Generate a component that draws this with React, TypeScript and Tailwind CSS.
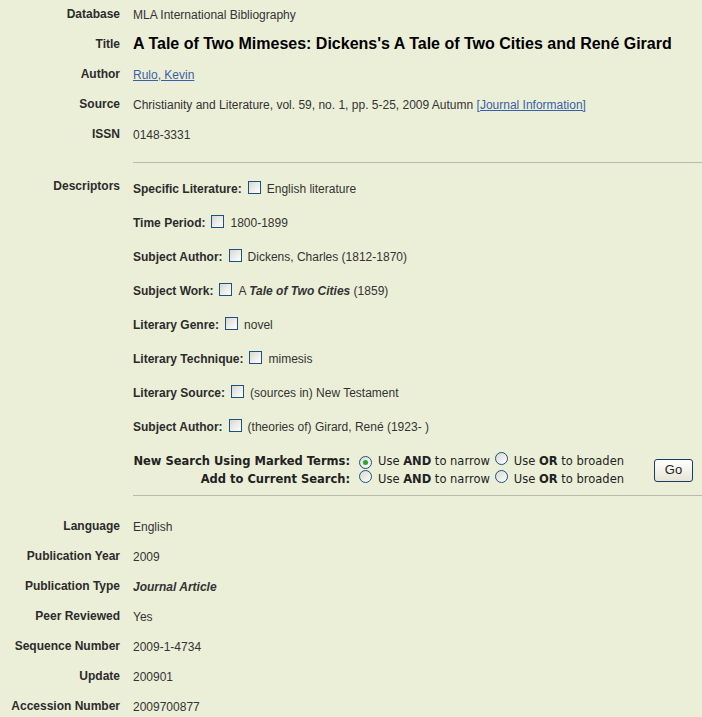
import React from 'react';

const SANS = { fontFamily: '"Liberation Sans", Arial, sans-serif' };

function Checkbox() {
  return (
    <span className="inline-block w-[13px] h-[13px] border border-[#1c5180] bg-gradient-to-br from-[#d8d8d2] to-white mx-[6px] shrink-0 -mt-[3px]" />
  );
}

function Radio({ checked = false }: { checked?: boolean }) {
  return (
    <span className="inline-flex w-[13px] h-[13px] rounded-full border border-[#1c5180] bg-gradient-to-br from-[#d8d8d2] to-white items-center justify-center shrink-0">
      {checked && <span className="w-[5px] h-[5px] rounded-full bg-[#2fa52f]" />}
    </span>
  );
}

function Row({ label, children, tall = false }: { label: string; children: React.ReactNode; tall?: boolean }) {
  return (
    <div className="flex h-[30px]">
      <div className="w-[120px] shrink-0 text-right pt-[7px] text-[12px] leading-[14px] font-bold text-[#2b2b2b]">{label}</div>
      <div className={`ml-[13px] ${tall ? 'pt-[4px]' : 'pt-[8px]'} text-[12px] leading-[14px] text-[#333] whitespace-nowrap`}>{children}</div>
    </div>
  );
}

const descriptors: { label: string; value: React.ReactNode }[] = [
  { label: 'Specific Literature:', value: 'English literature' },
  { label: 'Time Period:', value: '1800-1899' },
  { label: 'Subject Author:', value: 'Dickens, Charles (1812-1870)' },
  { label: 'Subject Work:', value: <>A <b><i>Tale of Two Cities</i></b> (1859)</> },
  { label: 'Literary Genre:', value: 'novel' },
  { label: 'Literary Technique:', value: 'mimesis' },
  { label: 'Literary Source:', value: '(sources in) New Testament' },
  { label: 'Subject Author:', value: '(theories of) Girard, René (1923- )' },
];

const details: [string, React.ReactNode][] = [
  ['Language', 'English'],
  ['Publication Year', '2009'],
  ['Publication Type', <b key="t"><i>Journal Article</i></b>],
  ['Peer Reviewed', 'Yes'],
  ['Sequence Number', '2009-1-4734'],
  ['Update', '200901'],
  ['Accession Number', '2009700877'],
];

export default function App() {
  return (
    <div className="min-h-screen w-[702px] bg-[#ecefd8] overflow-hidden" style={SANS}>
      {/* Citation */}
      <Row label="Database">MLA International Bibliography</Row>
      <Row label="Title" tall>
        <span className="text-[16px] leading-[20px] font-bold text-black">
          A Tale of Two Mimeses: Dickens's A Tale of Two Cities and René Girard
        </span>
      </Row>
      <Row label="Author">
        <a href="#" className="text-[#3a5fa8] underline">Rulo, Kevin</a>
      </Row>
      <Row label="Source">
        Christianity and Literature, vol. 59, no. 1, pp. 5-25, 2009 Autumn{' '}
        <a href="#" className="text-[#3a5fa8] underline">[Journal Information]</a>
      </Row>
      <Row label="ISSN">0148-3331</Row>

      <div className="ml-[133px] mt-[12px] border-t border-[#b9bda7]" />

      {/* Descriptors */}
      <div className="flex">
        <div className="w-[120px] shrink-0 text-right pt-[16px] text-[12px] leading-[14px] font-bold text-[#2b2b2b]">Descriptors</div>
        <div className="ml-[13px] flex-1 pt-[9px]">
          {descriptors.map((d, i) => (
            <div key={i} className="h-[34px] flex items-center whitespace-nowrap">
              <span className="text-[12px] font-bold text-[#2b2b2b]">{d.label}</span>
              <Checkbox />
              <span className="text-[12px] text-[#333]">{d.value}</span>
            </div>
          ))}

          {/* Search using marked terms */}
          <div className="flex items-center mt-[8px]" style={{ fontFamily: '"DejaVu Sans", Verdana, sans-serif' }}>
            <div className="text-[11.5px] leading-[18px] text-[#222]">
              {[
                ['New Search Using Marked Terms:', true],
                ['Add to Current Search:', false],
              ].map(([label, checked], i) => (
                <div key={i} className="flex items-center h-[18px] whitespace-nowrap">
                  <span className="w-[217px] text-right font-bold">{label as string}</span>
                  <span className="ml-[9px]"><Radio checked={checked as boolean} /></span>
                  <span className="ml-[6px]">Use <b>AND</b> to narrow</span>
                  <span className="ml-[5px]"><Radio /></span>
                  <span className="ml-[6px]">Use <b>OR</b> to broaden</span>
                </div>
              ))}
            </div>
            <button className="ml-auto mr-[9px] w-[39px] h-[23px] rounded-[3px] border border-[#1c3c64] bg-gradient-to-b from-white to-[#e6e4d6] text-[13px] text-[#222]" style={SANS}>
              Go
            </button>
          </div>
          <div className="mt-[7px] border-t border-[#b9bda7]" />
        </div>
      </div>

      {/* Details */}
      <div className="pt-[16px]">
        {details.map(([label, value]) => (
          <Row key={label} label={label}>{value}</Row>
        ))}
      </div>
    </div>
  );
}
